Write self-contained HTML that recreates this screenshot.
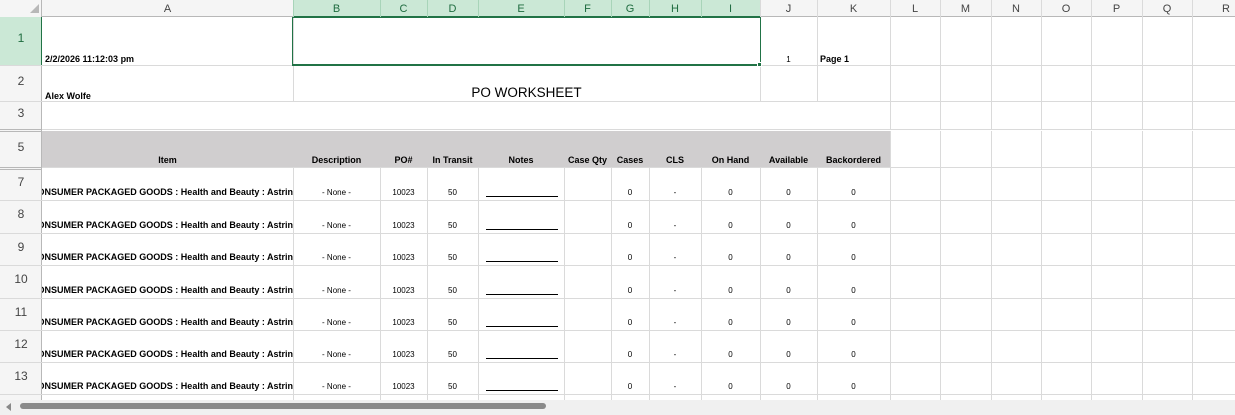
<!DOCTYPE html>
<html><head><meta charset="utf-8"><style>
*{margin:0;padding:0;box-sizing:border-box}
body{width:1235px;height:415px;overflow:hidden;background:#fff;font-family:"Liberation Sans",Arial,sans-serif;position:relative}
.a{position:absolute}
.hl{position:absolute;height:1px;background:#dadada}
.vl{position:absolute;width:1px;background:#dadada}
.ch{position:absolute;top:0;height:17px;font-size:11px;color:#444;text-align:center;line-height:19px}
.rh{position:absolute;left:0;width:42px;font-size:12px;color:#444;text-align:center}
.t{position:absolute;font-size:8px;color:#000;white-space:nowrap;overflow:hidden}
.b{font-weight:bold;font-size:9px}
</style></head><body>
<div class="a" style="left:0;top:0;width:1235px;height:17px;background:#f5f5f5;border-bottom:1px solid #b8b8b8"></div>
<div class="a" style="left:0;top:0;width:42px;height:400px;background:#f5f5f5;border-right:1px solid #b8b8b8"></div>
<div class="a" style="left:30px;top:4px;width:0;height:0;border-left:9px solid transparent;border-bottom:9px solid #b8b8b8"></div>
<div class="a" style="left:293px;top:0;width:467px;height:17px;background:#cbe8d6;border-bottom:1px solid #217346"></div>
<div class="a" style="left:0;top:17px;width:42px;height:48px;background:#cbe8d6;border-right:1px solid #217346"></div>
<div class="a" style="left:42px;top:131px;width:848px;height:36px;background:#d0cecf"></div>
<div id="g"></div>
<div class="a" style="left:0;top:400px;width:1235px;height:15px;background:#f0f0f0"></div>
<div class="a" style="left:6px;top:403px;width:0;height:0;border-top:4px solid transparent;border-bottom:4px solid transparent;border-right:5px solid #888"></div>
<div class="a" style="left:20px;top:403px;width:526px;height:6px;background:#8a8a8a;border-radius:3px"></div>
<div class="a" style="left:292px;top:17px;width:469px;height:49px;border:2px solid #217346;border-width:1px 1px 2px 1px"></div>
<div class="a" style="left:757px;top:62px;width:5px;height:5px;background:#217346;border:1px solid #fff"></div>
<script>
var cols=[42,293,380,427,478,564,611,649,701,760,817,890,940,991,1041,1091,1142,1192,1260];
var names="ABCDEFGHIJKLMNOPQR";
var g=document.getElementById('g'),h='';
for(var i=0;i<18;i++){h+='<div class="ch" style="left:'+cols[i]+'px;width:'+(cols[i+1]-cols[i])+'px;'+(i>=1&&i<=8?'color:#1e6b3f;':'')+'">'+names[i]+'</div>';
 h+='<div class="vl" style="left:'+cols[i+1]+'px;top:0;height:17px;background:'+(i>=0&&i<8?'#a8d4b9':'#dadada')+'"></div>';}
var rows=[[17,65,'1'],[65,101,'2'],[101,129,'3'],[131,167,'5'],[168,200,'7'],[200,233,'8'],[233,265,'9'],[265,298,'10'],[298,330,'11'],[330,362,'12'],[362,394,'13'],[394,400,'']];
rows.forEach(function(r){
 var c=r[2]=='1'?'#1e6b3f':'#444';
 if(r[2])h+='<div class="rh" style="top:'+r[0]+'px;height:'+(r[1]-r[0])+'px;line-height:'+((r[1]-r[0])*0.9)+'px;color:'+c+'">'+r[2]+'</div>';
 h+='<div class="hl" style="left:0;top:'+r[1]+'px;width:1235px;'+(r[2]=='3'||r[2]=='5'?'background:#b8b8b8;left:0;width:42px':'')+'"></div>';
 if(r[2]=='3'||r[2]=='5')h+='<div class="hl" style="left:42px;top:'+r[1]+'px;width:1193px"></div><div class="hl" style="left:0;top:'+(r[1]+2)+'px;width:42px;background:#b8b8b8"></div>';
 for(var i=1;i<18;i++){var x=cols[i];var skip=false;
  if(r[2]=='1'||r[2]=='2'){if(i>=2&&i<=8)skip=true;}
  if(r[2]=='3'){if(i<=10)skip=true;}
  if(r[2]=='5'){if(i<=10)skip=true;}
  if(!skip)h+='<div class="vl" style="left:'+x+'px;top:'+r[0]+'px;height:'+(r[1]-r[0]+1)+'px"></div>';}
});
function t(x,w,y,s,cls,al){h+='<div class="t '+(cls||'')+'" style="left:'+x+'px;width:'+w+'px;top:'+y+'px;text-align:'+(al||'center')+'">'+s+'</div>';}
t(45,240,54,'2/2/2026 11:12:03 pm','b','left');
t(760,57,55,'1','');
t(820,70,54,'Page 1','b','left');
t(45,240,91,'Alex Wolfe','b','left');
h+='<div class="t" style="left:293px;width:467px;top:85px;font-size:13.5px;text-align:center">PO WORKSHEET</div>';
var hd=['Item','Description','PO#','In Transit','Notes','Case Qty','Cases','CLS','On Hand','Available','Backordered'];
for(var i=0;i<11;i++)t(cols[i],cols[i+1]-cols[i],155,hd[i],'b');
rows.slice(4,11).forEach(function(r){var y=r[1]-12;
 h+='<div class="t" style="left:42px;width:251px;height:12px;top:'+(y-1)+'px"><span class="b" style="position:absolute;right:0;top:0">CONSUMER PACKAGED GOODS : Health and Beauty : Astrin</span></div>';
 var v=['- None -','10023','50','','','0','-','0','0','0'];
 for(var i=0;i<10;i++)if(v[i])t(cols[i+1],cols[i+2]-cols[i+1],y,v[i]);
 h+='<div class="a" style="left:486px;top:'+(r[1]-4)+'px;width:72px;height:1px;background:#000"></div>';
});
g.innerHTML=h;
</script>
</body></html>
